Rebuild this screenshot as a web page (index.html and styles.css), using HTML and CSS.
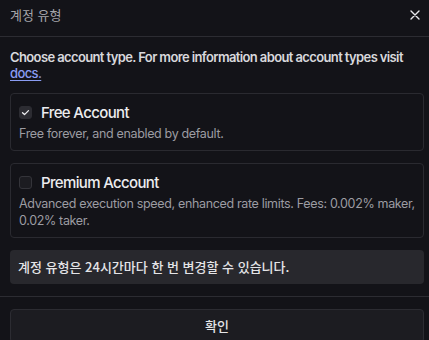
FILE: index.html
```html
<!DOCTYPE html>
<html lang="ko">
<head>
<meta charset="utf-8">
<link rel="stylesheet" href="styles.css">
</head>
<body>
<div class="dialog">
  <div class="header">
    <span class="title">계정 유형</span>
    <svg class="close" width="10" height="10" viewBox="0 0 10 10"><path d="M1 1 L9 9 M9 1 L1 9" stroke="#e8e8ec" stroke-width="1.4" stroke-linecap="round"/></svg>
  </div>
  <div class="body">
    <p class="intro">Choose account type. For more information about account types visit <a class="link" href="#">docs.</a></p>
    <div class="card">
      <div class="card-head">
        <span class="check checked"><svg width="9" height="9" viewBox="0 0 9 9"><path d="M1.5 4.8 L3.5 6.6 L7.5 2.6" fill="none" stroke="#f0f0f3" stroke-width="1.3" stroke-linecap="round" stroke-linejoin="round"/></svg></span>
        <span class="card-title">Free Account</span>
      </div>
      <p class="card-desc">Free forever, and enabled by default.</p>
    </div>
    <div class="card">
      <div class="card-head">
        <span class="check"></span>
        <span class="card-title">Premium Account</span>
      </div>
      <p class="card-desc">Advanced execution speed, enhanced rate limits. Fees: 0.002% maker, 0.02% taker.</p>
    </div>
    <div class="notice">계정 유형은 24시간마다 한 번 변경할 수 있습니다.</div>
  </div>
  <div class="footer">
    <button class="btn">확인</button>
  </div>
</div>
</body>
</html>
```
FILE: styles.css
```css
html, body {
  margin: 0;
  padding: 0;
  background: #131318;
}
body {
  font-family: Inter, "Noto Sans CJK KR", sans-serif;
  color: #d8d8dc;
  overflow: hidden;
}
.dialog {
  width: 429px;
}
.header {
  border-bottom: 1px solid #2c2c32;
  display: flex;
  align-items: center;
  justify-content: space-between;
  padding: 0 9px 0 10px;
  box-sizing: border-box;
  height: 37px;
}
.title {
  font-family: "Noto Sans CJK KR", sans-serif;
  font-size: 13px;
  color: #a4a4aa;
  line-height: 16px;
  margin-top: -6px;
}
.close {
  margin-top: -6px;
}
.body {
  padding: 12px 5px 12px 10px;
  border-bottom: 1px solid #2c2c32;
}
.intro {
  margin: 0 0 12px;
  font-size: 13px;
  font-weight: 600;
  line-height: 16px;
  color: #d8d8dc;
  letter-spacing: -0.62px;
}
.link {
  color: #8a9cf2;
  text-decoration: underline;
  text-underline-offset: 2px;
  font-weight: 500;
}
.card {
  border: 1px solid #2a2a30;
  border-radius: 4px;
  padding: 8px;
  margin-bottom: 12px;
}
.card-head {
  display: flex;
  align-items: center;
  gap: 9px;
  height: 20px;
}
.check {
  width: 13px;
  height: 13px;
  box-sizing: border-box;
  border-radius: 3px;
  border: 1px solid #34343a;
  background: #1c1c21;
  display: flex;
  align-items: center;
  justify-content: center;
}
.check.checked {
  background: #2c2c32;
  border-color: #2c2c32;
}
.card-title {
  font-size: 15px;
  font-weight: 500;
  color: #ececef;
  letter-spacing: -0.65px;
}
.card-desc {
  margin: 3px 0 0;
  font-size: 12.5px;
  line-height: 17px;
  color: #9c9ca2;
  letter-spacing: -0.34px;
}
.notice {
  background: #28282d;
  border-radius: 4px;
  padding: 8px;
  font-family: "Noto Sans CJK KR", sans-serif;
  font-size: 13px;
  font-weight: 500;
  line-height: 18px;
  color: #e4e4e7;
}
.footer {
  padding: 12px 5px 0 10px;
}
.btn {
  width: 100%;
  height: 34px;
  background: #1c1c21;
  border: 1px solid #2c2c32;
  border-radius: 4px;
  font-family: "Noto Sans CJK KR", sans-serif;
  font-size: 13px;
  font-weight: 500;
  color: #e4e4e7;
  padding: 0 0 2px;
}
```
